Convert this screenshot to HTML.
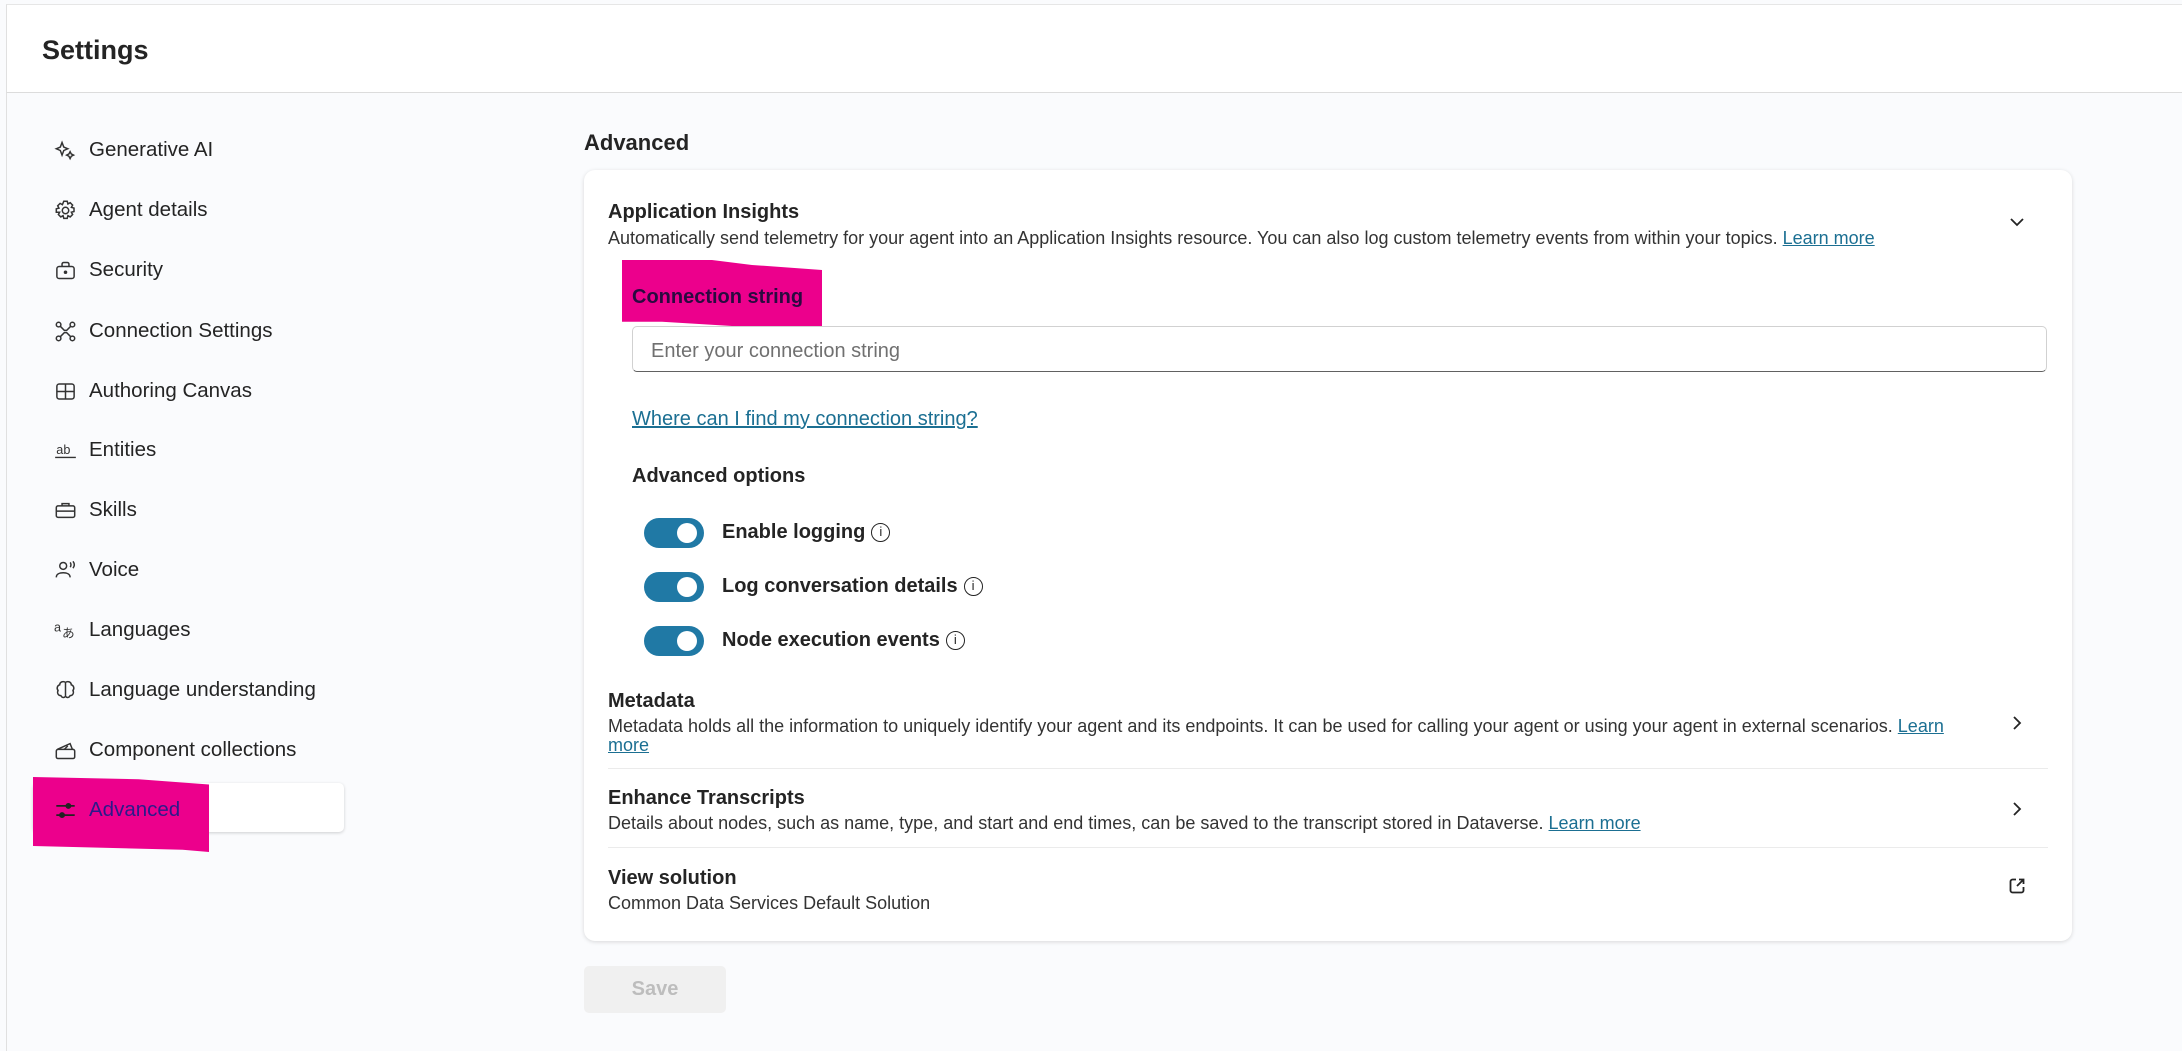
<!DOCTYPE html>
<html><head><meta charset="utf-8"><style>
*{margin:0;padding:0;box-sizing:border-box}
body{width:2182px;height:1051px;overflow:hidden;background:#fafbfd;font-family:"Liberation Sans",sans-serif;color:#242424;position:relative}
.abs{position:absolute}
.hdr{left:6px;top:4px;width:2176px;height:89px;background:#fff;border-bottom:1px solid #dcdcdc;border-top:1px solid #e6e6e6;border-left:1px solid #e0e0e0}
.side{left:6px;top:93px;width:1px;height:958px;background:#e0e0e0}
.nav{left:54px;font-size:20.5px;height:30px;line-height:30px;display:flex;align-items:center}
.nav svg{width:23px;height:23px;margin-right:12px;flex:none}
.t{white-space:nowrap}
.sb{font-weight:bold}
.link{color:#1b6f92;text-decoration:underline}
.tog{left:644px;width:60px;height:30px;border-radius:15px;background:#2079a5}
.tog:after{content:"";position:absolute;right:7px;top:5px;width:20px;height:20px;border-radius:50%;background:#fff}
.info{display:inline-block;width:19px;height:19px;border:1.6px solid #242424;border-radius:50%;font-size:13px;line-height:16px;text-align:center;font-weight:normal;vertical-align:2px;margin-left:6px}
.div{left:608px;width:1440px;height:1px;background:#ebebeb}
.d{font-size:18px;color:#333}
</style></head><body>
<div class="abs hdr"></div>
<div class="abs side"></div>
<div class="abs t sb" style="left:42px;top:35px;font-size:27px">Settings</div>

<div class="abs nav" style="top:135px"><svg viewBox="0 0 20 20" fill="none" stroke="#333" stroke-width="1.3"><path d="M7 3 L8.5 7 L12 8.5 L8.5 10 L7 14 L5.5 10 L2 8.5 L5.5 7Z"/><path d="M14 11 L15 13 L17 14 L15 15 L14 17 L13 15 L11 14 L13 13Z"/></svg><span>Generative AI</span></div>
<div class="abs nav" style="top:195px"><svg viewBox="0 0 20 20" fill="none" stroke="#333" stroke-width="1.3"><circle cx="10" cy="10" r="2.8"/><path d="M8.5 2h3l.6 2.3 2-1.1 2.1 2.1-1.1 2 2.3.6v3l-2.3.6 1.1 2-2.1 2.1-2-1.1-.6 2.3h-3l-.6-2.3-2 1.1-2.1-2.1 1.1-2L2 11.5v-3l2.3-.6-1.1-2 2.1-2.1 2 1.1z"/></svg><span>Agent details</span></div>
<div class="abs nav" style="top:255px"><svg viewBox="0 0 20 20" fill="none" stroke="#333" stroke-width="1.3"><rect x="2.5" y="6.5" width="15" height="10.5" rx="2"/><path d="M7 6.5V4.5a1.5 1.5 0 0 1 1.5-1.5h3A1.5 1.5 0 0 1 13 4.5v2"/><circle cx="10" cy="11.5" r=".9" fill="#333"/></svg><span>Security</span></div>
<div class="abs nav" style="top:316px"><svg viewBox="0 0 20 20" fill="none" stroke="#333" stroke-width="1.3"><circle cx="4" cy="4" r="2"/><circle cx="16" cy="4" r="2"/><circle cx="4" cy="16" r="2"/><circle cx="16" cy="16" r="2"/><path d="M5.5 5.5 9 9h2l3.5-3.5M5.5 14.5 9 11h2l3.5 3.5"/></svg><span>Connection Settings</span></div>
<div class="abs nav" style="top:376px"><svg viewBox="0 0 20 20" fill="none" stroke="#333" stroke-width="1.3"><rect x="2.5" y="3.5" width="15" height="13" rx="2"/><path d="M10 3.5v13M2.5 10h15"/></svg><span>Authoring Canvas</span></div>
<div class="abs nav" style="top:435px"><svg viewBox="0 0 20 20"><text x="2" y="13" font-size="11" font-family="Liberation Sans" fill="#333">ab</text><path d="M1 16h18" stroke="#333" stroke-width="1.2"/></svg><span>Entities</span></div>
<div class="abs nav" style="top:495px"><svg viewBox="0 0 20 20" fill="none" stroke="#333" stroke-width="1.3"><rect x="2" y="6" width="16" height="10" rx="1.5"/><path d="M7 6V4h6v2M2 10.5h16"/></svg><span>Skills</span></div>
<div class="abs nav" style="top:555px"><svg viewBox="0 0 20 20" fill="none" stroke="#333" stroke-width="1.3"><circle cx="8" cy="6" r="3"/><path d="M2 16c0-3 3-4 6-4s6 1 6 4M14 3c1 1 1 3 0 4M16.5 2c1.5 2 1.5 4 0 6"/></svg><span>Voice</span></div>
<div class="abs nav" style="top:615px"><svg viewBox="0 0 20 20"><text x="0" y="11" font-size="11" font-family="Liberation Sans" fill="#333">a</text><text x="7" y="16" font-size="11" font-family="Noto Sans CJK JP" fill="#333">あ</text></svg><span>Languages</span></div>
<div class="abs nav" style="top:675px"><svg viewBox="0 0 20 20" fill="none" stroke="#333" stroke-width="1.3"><path d="M10 3c-2-1.5-5-.5-5 2-2 .5-3 3-1.5 5-1 2 0 4.5 2.5 4.5 1 2 3 2 4 .5 1 1.5 3 1.5 4-.5 2.5 0 3.5-2.5 2.5-4.5 1.5-2 .5-4.5-1.5-5 0-2.5-3-3.5-5-2zM10 3v13"/></svg><span>Language understanding</span></div>
<div class="abs nav" style="top:735px"><svg viewBox="0 0 20 20" fill="none" stroke="#333" stroke-width="1.3"><rect x="2" y="9" width="16" height="8" rx="1.5"/><path d="M3 9l11-5 2 5M9 9l3-3"/></svg><span>Component collections</span></div>

<div class="abs" style="left:33px;top:783px;width:311px;height:49px;background:#fff;border-radius:5px;box-shadow:0 1px 3px rgba(0,0,0,.18)"></div>
<div class="abs" style="left:33px;top:777px;width:176px;height:75px;background:#ec008c;clip-path:polygon(0 0,60% 3%,100% 10%,100% 100%,85% 97%,0 92%)"></div>
<div class="abs nav" style="top:795px;color:#2b1a8a"><svg viewBox="0 0 20 20" fill="none" stroke="#222" stroke-width="1.5"><path d="M2 6h16M2 14h16"/><circle cx="12.5" cy="6" r="1.8" fill="#222"/><circle cx="7" cy="14" r="1.8" fill="#222"/></svg><span>Advanced</span></div>

<div class="abs t sb" style="left:584px;top:130px;font-size:22px">Advanced</div>
<div class="abs" style="left:584px;top:170px;width:1488px;height:771px;background:#fff;border-radius:11px;box-shadow:0 1px 4px rgba(0,0,0,.14)"></div>

<div class="abs t sb" style="left:608px;top:201px;font-size:20px">Application Insights</div>
<div class="abs t d" style="left:608px;top:228px">Automatically send telemetry for your agent into an Application Insights resource. You can also log custom telemetry events from within your topics. <span class="link">Learn more</span></div>
<svg class="abs" style="left:2008px;top:215px" width="18" height="14" viewBox="0 0 18 14" fill="none" stroke="#242424" stroke-width="1.8"><path d="M3 4l6 6 6-6"/></svg>

<div class="abs" style="left:622px;top:260px;width:200px;height:71px;background:#ec008c;clip-path:polygon(0 0,45% 0,65% 7%,100% 14%,100% 100%,72% 100%,55% 93%,20% 87%,0 87%)"></div>
<div class="abs t sb" style="left:632px;top:286px;font-size:20px;color:#2a0a40">Connection string</div>
<div class="abs" style="left:632px;top:326px;width:1415px;height:46px;border:1px solid #d1d1d1;border-bottom:1.5px solid #616161;border-radius:5px;background:#fff"></div>
<div class="abs t" style="left:651px;top:340px;font-size:20px;color:#707070">Enter your connection string</div>

<div class="abs t link" style="left:632px;top:408px;font-size:20px">Where can I find my connection string?</div>
<div class="abs t sb" style="left:632px;top:465px;font-size:20px">Advanced options</div>

<div class="abs tog" style="top:518px"></div>
<div class="abs t sb" style="left:722px;top:521px;font-size:20px">Enable logging<span class="info">i</span></div>
<div class="abs tog" style="top:572px"></div>
<div class="abs t sb" style="left:722px;top:575px;font-size:20px">Log conversation details<span class="info">i</span></div>
<div class="abs tog" style="top:626px"></div>
<div class="abs t sb" style="left:722px;top:629px;font-size:20px">Node execution events<span class="info">i</span></div>

<div class="abs t sb" style="left:608px;top:690px;font-size:20px">Metadata</div>
<div class="abs t d" style="left:608px;top:717px;line-height:19px">Metadata holds all the information to uniquely identify your agent and its endpoints. It can be used for calling your agent or using your agent in external scenarios. <span class="link">Learn</span><br><span class="link">more</span></div>
<svg class="abs" style="left:2010px;top:714px" width="14" height="18" viewBox="0 0 14 18" fill="none" stroke="#242424" stroke-width="1.8"><path d="M4 3l6 6-6 6"/></svg>
<div class="abs div" style="top:768px"></div>

<div class="abs t sb" style="left:608px;top:787px;font-size:20px">Enhance Transcripts</div>
<div class="abs t d" style="left:608px;top:813px">Details about nodes, such as name, type, and start and end times, can be saved to the transcript stored in Dataverse. <span class="link">Learn more</span></div>
<svg class="abs" style="left:2010px;top:800px" width="14" height="18" viewBox="0 0 14 18" fill="none" stroke="#242424" stroke-width="1.8"><path d="M4 3l6 6-6 6"/></svg>
<div class="abs div" style="top:847px"></div>

<div class="abs t sb" style="left:608px;top:867px;font-size:20px">View solution</div>
<div class="abs t d" style="left:608px;top:893px">Common Data Services Default Solution</div>
<svg class="abs" style="left:2008px;top:877px" width="18" height="18" viewBox="0 0 18 18" fill="none" stroke="#242424" stroke-width="1.8"><path d="M8 2.5H4.5a2 2 0 0 0-2 2v9a2 2 0 0 0 2 2h9a2 2 0 0 0 2-2V10M11 2.5h4.5V7M15.5 2.5 9 9"/></svg>

<div class="abs" style="left:584px;top:966px;width:142px;height:47px;background:#f0f0f0;border-radius:5px;color:#bdbdbd;font-size:20px;font-weight:bold;text-align:center;line-height:47px">Save</div>
</body></html>
